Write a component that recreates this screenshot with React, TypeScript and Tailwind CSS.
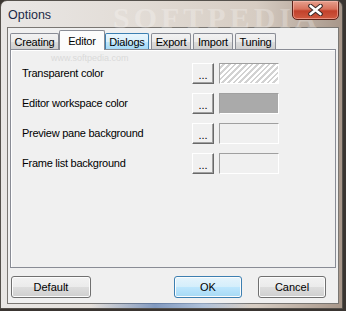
const tabs = [
  { label: "Creating", w: "w-[49px]", state: "normal" },
  { label: "Editor", w: "w-[46px]", state: "active" },
  { label: "Dialogs", w: "w-[44px]", state: "hover" },
  { label: "Export", w: "w-[40px]", state: "normal" },
  { label: "Import", w: "w-[40px]", state: "normal" },
  { label: "Tuning", w: "w-[41px]", state: "normal" },
];

const rows = [
  { label: "Transparent color", swatch: "hatch" },
  { label: "Editor workspace color", swatch: "gray" },
  { label: "Preview pane background", swatch: "empty" },
  { label: "Frame list background", swatch: "empty" },
];

function Tab({ label, w, state }: { label: string; w: string; state: string }) {
  if (state === "active") {
    return (
      <div
        className={`${w} -mx-[2px] h-[20px] -mb-px z-10 relative bg-[#fcfcfc] border border-b-0 border-[#898c95] rounded-t-[2px] flex justify-center pt-[2px] text-[11px] tracking-[-0.2px] text-black`}
      >
        {label}
      </div>
    );
  }
  const look =
    state === "hover"
      ? "border-[#3c7fb1] bg-[linear-gradient(180deg,#eaf6fd_0%,#d9f0fc_50%,#bee6fd_51%,#a7d9f5_100%)]"
      : "border-[#898c95] bg-[linear-gradient(180deg,#f2f2f2_0%,#ebebeb_50%,#dddddd_51%,#cfcfcf_100%)]";
  return (
    <div
      className={`${w} h-[16px] border border-b-0 rounded-t-[2px] ${look} flex justify-center pt-[2px] text-[11px] leading-[13px] tracking-[-0.2px] text-black`}
    >
      {label}
    </div>
  );
}

function Swatch({ kind }: { kind: string }) {
  const fill =
    kind === "hatch"
      ? "bg-[repeating-linear-gradient(135deg,#ffffff_0px,#ffffff_2px,#d2d2d2_2px,#d2d2d2_4px)]"
      : kind === "gray"
        ? "bg-[#aaaaaa]"
        : "bg-[#f0f0f0]";
  return (
    <div
      className={`ml-[5px] w-[60px] h-[21px] border border-t-[#a0a0a0] border-l-[#a0a0a0] border-b-white border-r-white ${fill}`}
    />
  );
}

function WinButton({ label, w, primary }: { label: string; w: string; primary?: boolean }) {
  return (
    <div
      className={`${w} h-[22px] rounded-[3px] border flex items-center justify-center text-[11px] text-black shadow-[inset_0_0_0_1px_#fcfcfc] ${
        primary
          ? "border-[#3c7fb1] bg-[linear-gradient(180deg,#e5f4fc_0%,#d4eefb_50%,#bde6fd_51%,#a6d9f4_100%)]"
          : "border-[#707070] bg-[linear-gradient(180deg,#f2f2f2_0%,#ebebeb_50%,#dddddd_51%,#cfcfcf_100%)]"
      }`}
    >
      {label}
    </div>
  );
}

export default function App() {
  return (
    <div className="w-[346px] h-[311px] bg-[#3a3531] overflow-hidden font-['Liberation_Sans',Arial,sans-serif]">
      <div className="relative w-[343px] h-[309px] rounded-t-[7px] border border-[#55514c] bg-[linear-gradient(90deg,#e9e7e5_0%,#e2dcd6_40%,#d6ccc2_75%,#a8978a_100%)] overflow-hidden">
        {/* watermark */}
        <div className="absolute left-[112px] top-[2px] text-[30px] font-bold tracking-[4px] text-white/25 font-['Liberation_Serif',serif] leading-none select-none">
          SOFTPEDIA
        </div>

        {/* Title bar */}
        <div className="h-[26px] flex items-center pl-[7px] pt-[2px]">
          <span className="text-[12.5px] text-[#1c2a48]">Options</span>
        </div>

        {/* Close button */}
        <div className="absolute top-[-1px] left-[291px] w-[47px] h-[20px] rounded-b-[5px] border border-[#5e2218] bg-[linear-gradient(180deg,#e6a08e_0%,#d8725c_45%,#c2412b_55%,#cf5a40_100%)] shadow-[inset_0_0_0_1px_rgba(255,200,190,0.5)] flex items-center justify-center">
          <svg width="15" height="12" viewBox="0 0 15 12">
            <path d="M2.5 2 L12.5 10 M12.5 2 L2.5 10" stroke="#3b2a28" strokeWidth="4.6" strokeLinecap="round" />
            <path d="M2.5 2 L12.5 10 M12.5 2 L2.5 10" stroke="#ffffff" strokeWidth="2.6" strokeLinecap="round" />
          </svg>
        </div>

        {/* Client area */}
        <div className="ml-[6px] w-[332px] h-[277px] border border-[#7a7773] bg-[#f0f0f0] flex flex-col">
          {/* Tab strip */}
          <div className="h-[21px] pl-[2px] flex items-end gap-[2px]">
            {tabs.map((t) => (
              <Tab key={t.label} {...t} />
            ))}
          </div>

          {/* Tab panel */}
          <div className="relative ml-[2px] w-[326px] h-[219px] border border-[#898c95] bg-[#f0f0f0] shadow-[inset_1px_1px_0_#ffffff] pt-[13px] pl-[11px] flex flex-col gap-[9px]">
            <div className="absolute left-[40px] top-[3px] text-[9px] leading-[10px] text-[#dadada] select-none">www.softpedia.com</div>
            {rows.map((r) => (
              <div key={r.label} className="flex items-center h-[21px] relative">
                <div className="w-[170px] text-[11px] tracking-[-0.25px] text-black">{r.label}</div>
                <div className="w-[22px] h-[21px] bg-[#f0f0f0] border border-t-white border-l-white border-b-[#696969] border-r-[#696969] shadow-[inset_-1px_-1px_0_#a0a0a0] flex items-end justify-center pb-[2px] text-[11px] leading-[12px] text-black">
                  ...
                </div>
                <Swatch kind={r.swatch} />
              </div>
            ))}
          </div>

          {/* Buttons */}
          <div className="mt-[8px] flex">
            <div className="ml-[3px]">
              <WinButton label="Default" w="w-[80px]" />
            </div>
            <div className="ml-[83px]">
              <WinButton label="OK" w="w-[68px]" primary />
            </div>
            <div className="ml-[16px]">
              <WinButton label="Cancel" w="w-[68px]" />
            </div>
          </div>
        </div>

        {/* bottom frame glow */}
        <div className="absolute left-[90px] bottom-0 w-[160px] h-[5px] bg-[linear-gradient(90deg,transparent,#5a7fb8_40%,#9bb8de_70%,transparent)] opacity-70" />
      </div>
    </div>
  );
}
